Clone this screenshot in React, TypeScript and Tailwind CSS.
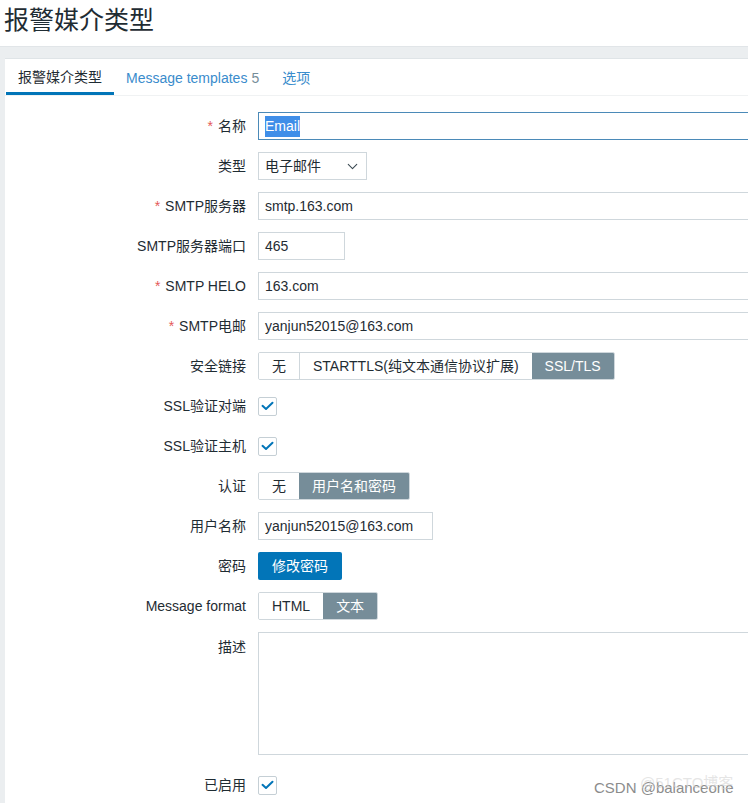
import React from "react";
import { ChevronDown } from "lucide-react";

const font = { fontFamily: '"Liberation Sans", Arial, "Noto Sans CJK SC", sans-serif' };

const Check = () => (
  <div className="w-[19px] h-[19px] border border-[#c5cfd5] rounded-[2px] bg-white flex items-center justify-center">
    <svg width="13" height="10" viewBox="0 0 13 10" fill="none">
      <path d="M1.5 4.8 L5 8 L11.5 1.8" stroke="#0275b8" strokeWidth="2" strokeLinecap="round" strokeLinejoin="round" />
    </svg>
  </div>
);

const Label = ({ text, required }: { text: string; required?: boolean }) => (
  <div className="text-right text-[14px] text-[#1f2c33] whitespace-nowrap">
    {required && <span className="text-[#e45959] mr-[5px]">*</span>}
    {text}
  </div>
);

const Segmented = ({ items, active }: { items: string[]; active: number }) => (
  <div className="flex h-[28px] border border-[#cfd7dc] rounded-[2px] overflow-hidden w-max">
    {items.map((it, i) => (
      <div
        key={it}
        className={`px-[13px] flex items-center text-[14px] ${
          i === active ? "bg-[#768d99] text-white" : "bg-white text-[#1f2c33]"
        } ${i > 0 && i !== active ? "border-l border-[#cfd7dc]" : ""}`}
      >
        {it}
      </div>
    ))}
  </div>
);

const Input = ({ value, w }: { value: string; w: string }) => (
  <div className={`${w} h-[28px] border border-[#cfd7dc] bg-white px-[6px] flex items-center text-[14px] text-[#1f2c33]`}>
    {value}
  </div>
);

export default function App() {
  const rows: { label: string; req?: boolean; ctrl: React.ReactNode }[] = [
    {
      label: "名称",
      req: true,
      ctrl: (
        <div className="w-[520px] h-[28px] border border-[#4b8ab8] bg-white px-[6px] flex items-center text-[14px]">
          <span className="bg-[#3f8ee8] text-white">Email</span>
        </div>
      ),
    },
    {
      label: "类型",
      ctrl: (
        <div className="w-[109px] h-[28px] border border-[#cfd7dc] bg-white pl-[6px] pr-[5px] flex items-center justify-between text-[14px] text-[#1f2c33]">
          <span>电子邮件</span>
          <ChevronDown size={17} strokeWidth={1.5} className="text-[#3b4a52]" />
        </div>
      ),
    },
    { label: "SMTP服务器", req: true, ctrl: <Input value="smtp.163.com" w="w-[520px]" /> },
    { label: "SMTP服务器端口", ctrl: <Input value="465" w="w-[87px]" /> },
    { label: "SMTP HELO", req: true, ctrl: <Input value="163.com" w="w-[520px]" /> },
    { label: "SMTP电邮", req: true, ctrl: <Input value="yanjun52015@163.com" w="w-[520px]" /> },
    { label: "安全链接", ctrl: <Segmented items={["无", "STARTTLS(纯文本通信协议扩展)", "SSL/TLS"]} active={2} /> },
    { label: "SSL验证对端", ctrl: <Check /> },
    { label: "SSL验证主机", ctrl: <Check /> },
    { label: "认证", ctrl: <Segmented items={["无", "用户名和密码"]} active={1} /> },
    { label: "用户名称", ctrl: <Input value="yanjun52015@163.com" w="w-[175px]" /> },
    {
      label: "密码",
      ctrl: (
        <div className="w-max h-[28px] px-[14px] rounded-[2px] bg-[#0275b8] text-white text-[14px] flex items-center">
          修改密码
        </div>
      ),
    },
    { label: "Message format", ctrl: <Segmented items={["HTML", "文本"]} active={1} /> },
  ];

  return (
    <div className="w-[748px] h-[803px] overflow-hidden bg-white relative" style={font}>
      <h1 className="h-[46px] pl-[4px] pt-[4px] text-[25px] leading-[32px] text-[#1f2c33]">报警媒介类型</h1>
      <div className="bg-[#ebeef0] border-t border-[#e1e5e8] pt-[11px] pl-[5px] h-full">
        <div className="bg-white border-t border-[#dfe4e7] h-full">
          <div className="flex h-[37px] border-b border-[#f0f2f3] pl-[1px]">
            <div className="px-[12px] flex items-center text-[14px] text-[#1f2c33] border-b-[3px] border-[#0275b8] pt-[3px]">
              报警媒介类型
            </div>
            <div className="px-[12px] flex items-center text-[14px] text-[#3a8ccc] pt-[3px]">
              Message templates <span className="ml-[4px] text-[#768d99]">5</span>
            </div>
            <div className="px-[11px] flex items-center text-[14px] text-[#3a8ccc] pt-[3px]">选项</div>
          </div>
          <div className="pt-[16px] grid grid-cols-[241px_1fr] gap-x-[12px] gap-y-[12px] items-center">
            {rows.map((r) => (
              <React.Fragment key={r.label}>
                <Label text={r.label} required={r.req} />
                <div className="h-[28px] flex items-center">{r.ctrl}</div>
              </React.Fragment>
            ))}
            <div className="self-start pt-[5px]">
              <Label text="描述" />
            </div>
            <div className="w-[520px] h-[123px] border border-[#cfd7dc] bg-white" />
            <div className="mt-[4px]">
              <Label text="已启用" />
            </div>
            <div className="mt-[4px] h-[28px] flex items-center">
              <Check />
            </div>
          </div>
        </div>
      </div>
      <div className="absolute left-[594px] top-[777px] text-[15px] text-[#8c8c8c] whitespace-nowrap" style={{ fontFamily: '"Liberation Sans", "Noto Sans CJK SC", sans-serif' }}>
        CSDN @balanceone
      </div>
      <div className="absolute left-[640px] top-[772px] text-[15px] text-[#d4d4d4]/60 whitespace-nowrap" style={{ fontFamily: '"Liberation Sans", "Noto Sans CJK SC", sans-serif' }}>
        @51CTO博客
      </div>
    </div>
  );
}
